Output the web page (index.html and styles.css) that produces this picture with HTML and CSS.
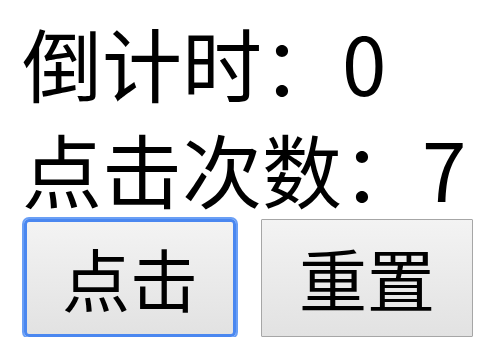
FILE: index.html
```html
<!DOCTYPE html>
<html lang="zh-CN">
<head>
<meta charset="utf-8">
<link rel="stylesheet" href="styles.css">
</head>
<body>
<div class="app">
  <div class="line">倒计时：0</div>
  <div class="line">点击次数：7</div>
  <div class="buttons">
    <button class="btn btn-focus">点击</button>
    <button class="btn">重置</button>
  </div>
</div>
</body>
</html>
```
FILE: styles.css
```css
html, body {
  margin: 0;
  padding: 0;
  background: #ffffff;
}
.app {
  padding: 8px 0 0 22px;
  font-family: "Noto Sans CJK SC", "Noto Sans", sans-serif;
  color: #000;
}
.line {
  font-size: 80px;
  line-height: 106px;
  white-space: nowrap;
}
.buttons {
  display: flex;
  gap: 25px;
  margin-top: -1px;
  padding-left: 2px;
}
.btn {
  box-sizing: border-box;
  width: 212px;
  height: 118px;
  padding: 0;
  font-family: "Noto Sans CJK SC", "Noto Sans", sans-serif;
  font-size: 68px;
  line-height: 1;
  color: #000;
  border: 1px solid #a6a6a6;
  border-radius: 1px;
  background: linear-gradient(#f3f3f3, #e2e2e2);
  outline: none;
}
.btn-focus {
  border: 3px solid #4a87f0;
  border-radius: 5px;
  box-shadow: 0 0 0 2px #6a9ff5;
}
```
